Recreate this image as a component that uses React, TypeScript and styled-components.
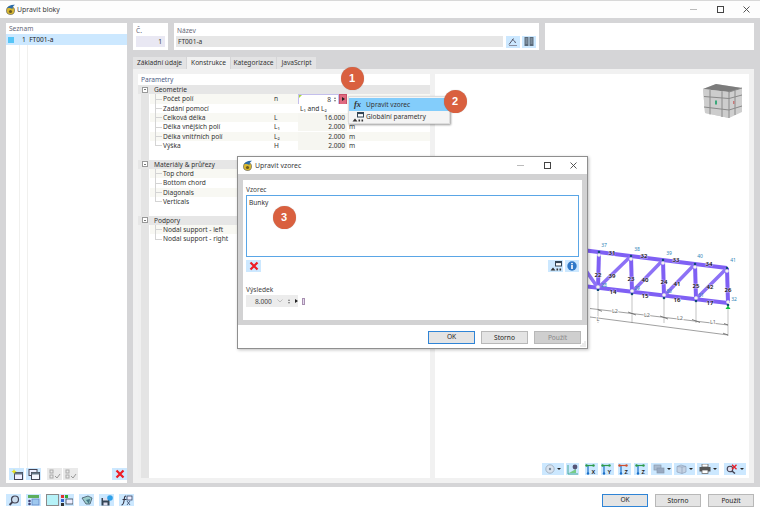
import React from "react";
import styled, { createGlobalStyle } from "styled-components";

const Global = createGlobalStyle`
  html, body { margin: 0; padding: 0; background: #fff; }
  #root { width: 760px; height: 513px; overflow: hidden; }
  * { box-sizing: border-box; }
`;

const Page = styled.div`
  position: relative; width: 760px; height: 513px; overflow: hidden;
  display: flex; flex-direction: column; background: #fff;
  font-family: "Noto Sans", "Open Sans", sans-serif; font-size: 6.6px; color: #3a3a3a;
`;
const TitleBar = styled.div`
  height: 18px; flex: none; display: flex; align-items: center; padding: 0 10px 0 5px; gap: 1px; background: #fdfdfd;
  border-top: 1px solid #d8d8d8; font-size: 6.9px;
`;
const TitleText = styled.span` flex: 1; `;
const WinButtons = styled.div<{ $w: number }>`
  display: flex; align-items: center; justify-content: space-between; width: ${p => p.$w}px; flex: none; color: #333;
`;
const Main = styled.div`
  flex: 1; min-height: 0; display: flex; gap: 6px; padding: 5px 6px 4px; background: #d5d5d7;
`;
const ListPanel = styled.div`
  width: 121px; flex: none; background: #fff; display: flex; flex-direction: column;
`;
const PanelLabel = styled.div`
  height: 11px; padding-left: 3px; line-height: 11px; color: #667;
`;
const ListRow = styled.div`
  height: 11px; background: #cce8ff; display: flex; align-items: center; padding-left: 2px; color: #222; flex: none;
`;
const ListSwatch = styled.span` width: 6px; height: 6px; background: #55c5f7; margin-right: 8px; flex: none; `;
const ListBody = styled.div`
  flex: 1; position: relative; margin-left: 13px; border-left: 1px solid #f0f0ee;
  &::after { content: ""; display: block; width: 7px; height: 100%; margin-left: 0; border-right: 1px solid #f0f0ee; }
`;
const ToolRow = styled.div`
  height: 15px; flex: none; display: flex; align-items: flex-start; padding-left: 3px; gap: 2px;
`;
const RightColumn = styled.div` flex: 1; min-width: 0; display: flex; flex-direction: column; `;
const HeaderRow = styled.div` height: 27px; flex: none; display: flex; gap: 6px; `;
const HeaderCard = styled.div<{ $w?: number }>`
  background: #fff; display: flex; flex-direction: column; padding: 3px 3px 2px;
  ${p => (p.$w ? `width: ${p.$w}px; flex: none;` : "flex: 1; min-width: 0;")}
`;
const HeaderLabel = styled.div` height: 10px; line-height: 9px; color: #667; `;
const NumberField = styled.div`
  height: 11px; background: #e9e8f3; text-align: right; padding-right: 3px; line-height: 11px; color: #333;
`;
const NameLine = styled.div` display: flex; align-items: center; gap: 2px; height: 11px; `;
const NameField = styled.div`
  width: 327px; height: 11px; margin-left: -1px; background: #e6e6e6; padding-left: 2px; line-height: 11px; color: #333; margin-right: 1px;
`;
const Tabs = styled.div` height: 12px; margin-top: 7px; flex: none; display: flex; gap: 1px; `;
const Tab = styled.div<{ $active?: boolean; $w: number }>`
  width: ${p => p.$w}px; text-align: center; line-height: 12px; color: #333;
  background: ${p => (p.$active ? "#f1f1f1" : "#e3e3e4")};
`;
const Surface = styled.div`
  flex: 1; min-height: 0; background: #f1f1f1; display: flex; gap: 5px; padding: 5px;
`;
const ParamPanel = styled.div`
  width: 292px; flex: none; background: #fff; display: flex; flex-direction: column;
`;
const ParamTitle = styled.div` height: 11px; line-height: 11px; padding-left: 3px; color: #4d5c86; flex: none; `;
const Tree = styled.div`
  flex: 1; display: flex; flex-direction: column; background: linear-gradient(90deg, #f0f0f0 0 3px, #e4e4e4 3px 11px, #fff 11px);
`;
const GroupRow = styled.div`
  height: 9.33px; flex: none; background: #e6e6e6; display: flex; align-items: center; padding-left: 4px; color: #333;
`;
const Expander = styled.span`
  width: 6px; height: 6px; border: 1px solid #999; background: #fff; margin-right: 6px; flex: none; position: relative;
  &::after { content: ""; position: absolute; left: 1px; right: 1px; top: 1.5px; height: 1px; background: #777; }
`;
const Spacer = styled.div` height: 9.33px; flex: none; `;
const Row = styled.div<{ $last?: boolean; $tint?: boolean }>`
  height: 9.33px; flex: none; margin-left: 12px; display: flex; align-items: center; position: relative; line-height: 9px;
  background: ${p => (p.$tint ? "#f8f8f3" : "transparent")};
  &::before { content: ""; position: absolute; left: 5px; top: 0; bottom: ${p => (p.$last ? "4.5px" : "0")}; border-left: 1px solid #d4d4d4; }
  &::after { content: ""; position: absolute; left: 5px; width: 7px; top: 4.5px; border-top: 1px solid #d4d4d4; }
`;
const RowName = styled.span<{ $w?: number }>` width: ${p => p.$w ?? 122}px; padding-left: 13px; flex: none; white-space: nowrap; color: #333; `;
const RowSymbol = styled.span` width: 26px; flex: none; padding-left: 2px; color: #333; `;
const RowValue = styled.span<{ $plain?: boolean; $left?: boolean }>`
  width: 49px; flex: none; text-align: ${p => (p.$left ? "left" : "right")}; padding: 0 2px; color: #333; white-space: nowrap;
  background: ${p => (p.$plain ? "#fff" : "#f6f6f1")};
`;
const RowUnit = styled.span` padding-left: 2px; color: #333; `;
const ActiveValue = styled.div`
  width: 41px; height: 11px; flex: none; border: 1px solid #c4bfec; background: #fff; display: flex; align-items: center; justify-content: flex-end;
  padding-right: 1px; gap: 2px; position: relative; margin-right: 0;
  &::before { content: ""; position: absolute; left: 0; top: 0; border-top: 3px solid #a8d838; border-right: 3px solid transparent; }
`;
const Spin = styled.span`
  display: flex; flex-direction: column; gap: 1px; width: 4px; align-items: center;
  &::before { content: ""; border-bottom: 2px solid #777; border-left: 1.5px solid transparent; border-right: 1.5px solid transparent; }
  &::after { content: ""; border-top: 2px solid #777; border-left: 1.5px solid transparent; border-right: 1.5px solid transparent; }
`;
const ArrowBtn = styled.div`
  width: 8px; height: 11px; flex: none; background: #e06a80; border: 1px solid #c85068; display: flex; align-items: center; justify-content: center;
  &::after { content: ""; border-left: 3px solid #222; border-top: 2px solid transparent; border-bottom: 2px solid transparent; }
`;
const Viewer = styled.div`
  flex: 1; min-width: 0; background: #fff; position: relative; display: flex; flex-direction: column; justify-content: flex-end;
`;
const ViewerTools = styled.div`
  height: 15px; flex: none; display: flex; align-items: flex-start; justify-content: flex-end; padding-right: 3px; position: relative;
`;
const CubeSvg = styled.svg` position: absolute; left: 268px; top: 10px; `;
const TrussSvg = styled.svg` position: absolute; left: 0; top: 0; `;
const Tool = styled.span<{ $w?: number; $ml?: number; $off?: boolean }>`
  width: ${p => p.$w ?? 15}px; height: 12px; flex: none; margin-left: ${p => p.$ml ?? 0}px;
  background: ${p => (p.$off ? "#eaeaea" : "#cce8ff")}; display: flex; align-items: center; justify-content: center; gap: 2px;
`;
const Caret = styled.span`
  border-top: 2.5px solid #222; border-left: 2px solid transparent; border-right: 2px solid transparent;
`;
const BottomBar = styled.div`
  height: 26px; flex: none; display: flex; align-items: flex-start; padding: 7px 6px 0; background: #fff;
`;
const BottomTools = styled.div` flex: 1; display: flex; gap: 5px; `;
const Swatch = styled.span`
  width: 13px; height: 12px; flex: none; background: #b6f2f8; border: 1px solid #8a8a8a; margin-right: -5px;
`;
const Buttons = styled.div` display: flex; gap: 7px; `;
const Btn = styled.div<{ $primary?: boolean; $off?: boolean; $w?: number }>`
  width: ${p => p.$w ?? 46}px; height: 13px; text-align: center; line-height: ${p => (p.$primary ? "10px" : "11px")}; background: ${p => (p.$off ? "#cfcfcf" : "#e4e4e4")};
  border: ${p => (p.$primary ? "1.5px solid #2f84d6" : "1px solid #b8b8b8")}; color: ${p => (p.$off ? "#888" : "#222")};
`;
const Menu = styled.div`
  position: absolute; left: 348px; top: 96px; width: 102px; height: 28px; background: #f4f4f4; border: 1px solid #ddd;
  box-shadow: 1px 1px 2px rgba(0,0,0,.4); display: flex; flex-direction: column; padding-top: 1px;
`;
const MenuItem = styled.div<{ $on?: boolean }>`
  height: 12.5px; display: flex; align-items: center; background: ${p => (p.$on ? "#83cdfb" : "transparent")}; color: #333; flex: none;
`;
const MenuIcon = styled.span`
  width: 17px; flex: none; display: flex; justify-content: center; font-family: "Liberation Serif", serif; font-style: italic; font-weight: 700; font-size: 8.5px; color: #333;
`;
const Badge = styled.div<{ $x: number; $y: number }>`
  position: absolute; left: ${p => p.$x - 11.5}px; top: ${p => p.$y - 11.5}px; width: 23px; height: 23px; border-radius: 50%;
  background: #d9603f; color: #fff; font-family: "Liberation Sans", sans-serif; font-weight: 700; font-size: 11px; text-align: center; line-height: 23px;
  box-shadow: 0 0 1px rgba(0,0,0,.3);
`;
const Dialog = styled.div`
  position: absolute; left: 237px; top: 156px; width: 351px; height: 193px; background: #fff; border: 1px solid #8f8f8f;
  box-shadow: 1px 1px 3px rgba(0,0,0,.25); display: flex; flex-direction: column;
`;
const DialogTitle = styled.div`
  height: 17px; flex: none; display: flex; align-items: center; padding: 0 10px 0 4px; gap: 2px; font-size: 6.9px;
`;
const DialogBody = styled.div`
  height: 151px; flex: none; background: #d2d2d3; padding: 6px 5px 5px;
`;
const DialogInner = styled.div`
  height: 140px; background: #fff; padding: 5px 3px 0; display: flex; flex-direction: column;
`;
const FieldLabel = styled.div` height: 10px; line-height: 9px; color: #444; `;
const FormulaBox = styled.div`
  height: 62px; border: 1px solid #5aa6e6; padding: 2px; color: #333; line-height: 9px;
`;
const FormulaTools = styled.div` display: flex; justify-content: space-between; margin-top: 3px; height: 13px; `;
const FormulaRight = styled.div` display: flex; gap: 2px; `;
const ResultLabel = styled(FieldLabel)` margin-top: 12px; `;
const ResultLine = styled.div` display: flex; align-items: center; height: 12px; `;
const ResultField = styled.div`
  width: 52px; height: 12px; background: #ececec; display: flex; align-items: center; padding-left: 9px; gap: 5px; color: #444; flex: none;
`;
const Chevron = styled.svg` flex: none; `;
const ResultArrow = styled.span`
  border-left: 3px solid #222; border-top: 2px solid transparent; border-bottom: 2px solid transparent;
`;
const ResultMark = styled.span`
  width: 3px; height: 7px; margin-left: 4px; border: 1px solid #a890b0; background: #e4daf0;
`;
const DialogFooter = styled.div`
  flex: 1; display: flex; justify-content: flex-end; align-items: flex-start; gap: 6px; padding: 6px 6px 0; position: relative;
`;
const Grip = styled.svg` position: absolute; right: 1px; bottom: 1px; `;

type IconKind = "new" | "copy" | "checks" | "unchecks" | "x" | "search" | "table" | "tree" | "view" | "save" | "fx" | "globals" | "info" | "sigma" | "iso" | "ax" | "layers" | "box" | "print" | "find" | "name" | "col";

const Ico = ({ k, label, c = "#2f6fa8" }: { k: IconKind; label?: string; c?: string }) => {
  switch (k) {
    case "x":
      return <svg width="10" height="10" viewBox="0 0 10 10"><path d="M1.5 1.5l7 7M8.5 1.5l-7 7" stroke="#ee1c25" strokeWidth="2.2" /></svg>;
    case "new":
      return <svg width="12" height="11" viewBox="0 0 12 11"><rect x="3.5" y="3.5" width="8" height="7" fill="#eef" stroke="#445" /><rect x="3.5" y="3.5" width="8" height="2" fill="#678" /><path d="M3 0l.8 1.8L5.6 2.6 3.8 3.4 3 5.2 2.2 3.4.4 2.6l1.8-.8z" fill="#e8e020" /></svg>;
    case "copy":
      return <svg width="12" height="11" viewBox="0 0 12 11"><rect x="1" y=".5" width="8" height="6" fill="#eef" stroke="#445" /><rect x="3.5" y="3.5" width="8" height="7" fill="#f5f5ff" stroke="#445" /><rect x="3.5" y="3.5" width="8" height="2" fill="#678" /></svg>;
    case "checks":
    case "unchecks":
      return <svg width="12" height="10" viewBox="0 0 12 10"><rect x="1" y="1" width="3" height="3" fill="none" stroke="#aaa" /><rect x="1" y="6" width="3" height="3" fill="none" stroke="#aaa" /><path d="M6 7l2 2 3-4" fill="none" stroke="#999" /></svg>;
    case "search":
      return <svg width="12" height="11" viewBox="0 0 12 11"><circle cx="7" cy="4.5" r="3.5" fill="#cde" stroke="#445" strokeWidth="1.2" /><path d="M4.5 7L1.5 10" stroke="#445" strokeWidth="1.8" /></svg>;
    case "table":
      return <svg width="13" height="11" viewBox="0 0 13 11"><rect x="1" y="0" width="11" height="3" fill="#5cae5c" /><rect x="5" y="4" width="7" height="6" fill="#9ec8ee" stroke="#5a7fc0" strokeWidth=".7" /><circle cx="2.5" cy="6" r="1.3" fill="#447" /><circle cx="2.5" cy="9" r="1.3" fill="#447" /></svg>;
    case "tree":
      return <svg width="13" height="11" viewBox="0 0 13 11"><rect x="1" y="0" width="3" height="3" fill="#d33" /><rect x="5" y="0" width="3" height="3" fill="#3a3" /><rect x="1" y="4" width="3" height="3" fill="#36c" /><rect x="1" y="8" width="3" height="3" fill="#333" /><rect x="6" y="4" width="7" height="5" fill="#eef" stroke="#345" strokeWidth=".8" /></svg>;
    case "view":
      return <svg width="12" height="11" viewBox="0 0 12 11"><path d="M1 3l6-2 4 2-2 6H5z" fill="#9cc" stroke="#456" strokeWidth=".8" /><path d="M5 5l4-1-1 5" fill="#478" /></svg>;
    case "save":
      return <svg width="12" height="11" viewBox="0 0 12 11"><rect x="0.5" y="3" width="8" height="7.5" fill="#345" /><rect x="2" y="3" width="5" height="2.5" fill="#dde" /><rect x="2.5" y="7.5" width="4" height="3" fill="#dde" /><circle cx="9" cy="3" r="2.8" fill="#2fa0e8" /></svg>;
    case "fx":
      return <svg width="13" height="11" viewBox="0 0 13 11"><path d="M6 1C4 1 4.5 3 4 6S3 10 1.5 10" fill="none" stroke="#334" strokeWidth="1.1" /><path d="M2.5 4.5h4" stroke="#334" /><rect x="7" y="1" width="5" height="4" fill="#eef" stroke="#346" strokeWidth=".8" /><path d="M7 6l3 4M10 6l-3 4" stroke="#346" strokeWidth=".8" /></svg>;
    case "globals":
      return <svg width="12" height="10" viewBox="0 0 12 10"><rect x="5.5" y=".5" width="6" height="4.5" fill="#fff" stroke="#345" /><rect x="5.5" y=".5" width="6" height="1.6" fill="#345" /><path d="M.5 9.5L3 6.5l2.5 3z" fill="#333" /><rect x="6.5" y="7.5" width="1.6" height="2" fill="#333" /><rect x="9.5" y="7.5" width="1.6" height="2" fill="#333" /></svg>;
    case "info":
      return <svg width="10" height="10" viewBox="0 0 10 10"><circle cx="5" cy="5" r="4.7" fill="#2f78c8" /><rect x="4.2" y="4" width="1.6" height="4" fill="#fff" /><rect x="4.2" y="1.9" width="1.6" height="1.4" fill="#fff" /></svg>;
    case "name":
      return <svg width="10" height="9" viewBox="0 0 10 9"><path d="M1 7.5L5.500 1.500M4 2.500C6 3 7 4.500 7.500 6" fill="none" stroke="#556" strokeWidth="1" /><path d="M1 8.500h8" stroke="#778" strokeWidth=".8" /></svg>;
    case "col":
      return <svg width="10" height="9" viewBox="0 0 10 9"><rect x="0.500" y="0" width="4" height="9" fill="#5a6a7a" /><rect x="5.500" y="0" width="4" height="9" fill="#5a6a7a" /><path d="M1.500 2h2M1.500 4h2M1.500 6h2M6.500 2h2M6.500 4h2M6.500 6h2" stroke="#cde" strokeWidth=".6" /></svg>;
    case "iso":
      return <svg width="10" height="10" viewBox="0 0 10 10"><circle cx="5" cy="5" r="4.2" fill="#d8e2ee" stroke="#9ab" strokeWidth=".8" /><circle cx="5" cy="5" r="1.2" fill="#789" /></svg>;
    case "sigma":
      return <svg width="12" height="11" viewBox="0 0 12 11"><path d="M1 1v9h10" fill="none" stroke="#4a9" strokeWidth="1" /><path d="M2 9l7-4v4z" fill="#7c8" /><circle cx="8" cy="3" r="2.4" fill="#557" /></svg>;
    case "ax":
      return <svg width="13" height="11" viewBox="0 0 13 11"><path d="M3 2v7" stroke="#1b6fc8" strokeWidth="1.2" /><path d="M1 1.5h7" stroke={c} strokeWidth="1.2" /><circle cx="1.5" cy="1.5" r="1.2" fill={c} /><circle cx="8.5" cy="1.5" r="1.2" fill={c} /><circle cx="3" cy="9.5" r="1.2" fill="#1b6fc8" /><text x="6.4" y="10" fontSize="5.5" fontWeight="700" fill="#222" fontFamily="Liberation Sans">{label}</text></svg>;
    case "layers":
      return <svg width="12" height="10" viewBox="0 0 12 10"><rect x="1" y="1" width="7" height="5" fill="#aabbd0" stroke="#8899ad" strokeWidth=".7" /><rect x="4" y="4" width="7" height="5" fill="#98aac2" stroke="#8899ad" strokeWidth=".7" /></svg>;
    case "box":
      return <svg width="11" height="10" viewBox="0 0 11 10"><path d="M1 2.5L5 1l5 1.5V8L6 9.5 1 8z" fill="#c5d3e4" stroke="#8fa2ba" strokeWidth=".7" /><path d="M6 3v6.5M1 2.5L6 3l4-.5" stroke="#8fa2ba" strokeWidth=".7" fill="none" /></svg>;
    case "print":
      return <svg width="12" height="10" viewBox="0 0 12 10"><rect x="3" y="0" width="6" height="3" fill="#fff" stroke="#555" strokeWidth=".7" /><rect x="0.5" y="3" width="11" height="4.5" fill="#555" /><rect x="3" y="6" width="6" height="3.5" fill="#fff" stroke="#555" strokeWidth=".7" /></svg>;
    case "find":
      return <svg width="12" height="10" viewBox="0 0 12 10"><circle cx="4" cy="5" r="2.8" fill="#dde" stroke="#445" strokeWidth="1.1" /><path d="M6 7l3 2.5" stroke="#445" strokeWidth="1.5" /><path d="M6 .8l4.5 4.5M10.5.8L6 5.3" stroke="#e8202a" strokeWidth="1.4" /></svg>;
  }
};

const LogoIcon = () => (
  <svg width="11" height="12" viewBox="0 0 11 12">
    <path d="M1.5 6a4 4 0 1 0 8 1 4 4 0 0 0-8-1z" fill="#d8b830" stroke="#555" strokeWidth=".6" />
    <path d="M2 4.5C3 2 6 .5 10 .8 8 2 7.500 3.500 7.500 5 5.500 3.800 3.500 4 2 4.500z" fill="#2d6ca8" />
    <circle cx="5.500" cy="7.500" r="1.600" fill="#6a5a20" />
  </svg>
);

const MinIcon = () => <svg width="7" height="7" viewBox="0 0 7 7"><path d="M0 3.500h7" stroke="#aaa" strokeWidth=".8" /></svg>;
const MaxIcon = () => <svg width="7" height="7" viewBox="0 0 7 7"><rect x=".5" y=".5" width="6" height="6" fill="none" stroke="#444" /></svg>;
const CloseIcon = () => <svg width="7" height="7" viewBox="0 0 7 7"><path d="M.5 .5l6 6M6.500 .5l-6 6" stroke="#444" strokeWidth=".9" /></svg>;

const Cube = () => (
  <CubeSvg width="39" height="34" viewBox="0 0 39 34">
    <path d="M0 5L13 0 39 4 39 28 26 34 2 29z" fill="#cfcfcf" />
    <path d="M0 5L13 0 39 4 26 8z" fill="#7c7c7c" />
    <path d="M0 5l26 3v26L2 29z" fill="#cdcdcd" />
    <path d="M7 5.800V30.500M19 7.200V33M1 12.500l25 2M1 23l25 3M26 8V34M26 8L39 4M26 14.500L39 11M26 26l13-4M32 6.500V31" stroke="#8a8a8a" strokeWidth="1" fill="none" />
    <rect x="12" y="16.500" width="2" height="4" fill="#3aa87a" />
    <rect x="30" y="17" width="1.500" height="3" fill="#c87a7a" />
  </CubeSvg>
);

const Truss = () => {
  const top = [[566, 248], [599, 252], [631, 256], [663, 260], [695, 264], [727, 268]];
  const bot = [[566, 284], [598, 288], [632, 292], [664, 296], [696, 299], [728, 303]];
  const ticks = [598, 632, 664, 696, 728];
  const members = "#7f60f4";
  return (
    <TrussSvg width="314" height="405" viewBox="435 74 314 405">
      {ticks.map(x => <path key={x} d={`M${x} 292V${x === 728 ? 336 : 323}`} stroke="#aaa" strokeWidth=".7" />)}
      <path d="M590 308.500L728 325M590 317L728 335" stroke="#777" strokeWidth=".7" fill="none" />
      <path d="M598 309.800l4 1.500M632 313.500l-4-1.500M632 313.500l4 1.500M664 317.500l-4-1.500M664 317.500l4 1.500M696 321l-4-1.500M696 321l4 1.500M728 325l-4-1.500M728 335l-5-1.800" stroke="#666" strokeWidth=".8" fill="none" />
      <path d="M566 248L727 268M566 284L728 303" stroke={members} strokeWidth="4" fill="none" />
      {top.map((t, i) => <path key={i} d={`M${t[0]} ${t[1]}L${bot[i][0]} ${bot[i][1]}`} stroke={members} strokeWidth="4" />)}
      <path d="M580 262L598 288L631 256M632 292L663 260M664 296L695 264M696 299L727 268" stroke="#8d72f6" strokeWidth="3.500" fill="none" />
      {[...top.slice(1), ...bot.slice(1)].map((p, i) => (
        <React.Fragment key={i}>
          <circle cx={p[0]} cy={i < 5 ? p[1] + 3 : p[1] - 1} r="1.800" fill="#f4f4f0" />
          <circle cx={p[0]} cy={i < 5 ? p[1] : p[1] + 2} r="1.300" fill="#124a78" />
        </React.Fragment>
      ))}
      <path d="M725.500 309l2.500-3.500 2.500 3.500z" fill="#10c040" />
      {[["37", 604, 247], ["38", 637, 251], ["39", 669, 255], ["40", 700, 258], ["41", 733, 262], ["28", 604, 287], ["29", 637, 290], ["30", 669, 293], ["31", 701, 297], ["32", 734, 301]].map(([t, x, y]) => (
        <NodeText key={String(t)} x={x as number} y={y as number}>{t}</NodeText>
      ))}
      {[["31", 612, 255], ["32", 644, 258], ["33", 676, 262], ["34", 709, 266], ["22", 598, 277], ["39", 612, 278], ["23", 631, 281], ["40", 645, 282], ["24", 664, 284], ["41", 677, 286], ["25", 696, 288], ["42", 710, 289], ["26", 728, 292], ["14", 613, 294], ["15", 645, 298], ["16", 677, 302], ["17", 710, 305]].map(([t, x, y], i) => (
        <MemberText key={i} x={x as number} y={y as number}>{t}</MemberText>
      ))}
      {[["L2", 615, 313], ["L2", 647, 317], ["L2", 680, 320], ["L1", 713, 324], ["L", 598, 321]].map(([t, x, y], i) => (
        <DimText key={i} x={x as number} y={y as number}>{t}</DimText>
      ))}
    </TrussSvg>
  );
};
const NodeText = styled.text` font-size: 5px; fill: #2e86b8; text-anchor: middle; font-family: "Noto Sans", sans-serif; `;
const MemberText = styled.text`
  font-size: 6px; fill: #111; font-weight: 600; text-anchor: middle; font-family: "Noto Sans", sans-serif;
  paint-order: stroke; stroke: rgba(255,255,255,.45); stroke-width: 1.2px;
`;
const DimText = styled.text` font-size: 5.500px; fill: #666; text-anchor: middle; font-family: "Noto Sans", sans-serif; paint-order: stroke; stroke: #fff; stroke-width: 1.500px; `;

const Chev = () => <Chevron width="6" height="4" viewBox="0 0 6 4"><path d="M.5 .5L3 3 5.500 .5" fill="none" stroke="#aaa" strokeWidth=".7" /></Chevron>;

export default function App() {
  return (
    <Page>
      <Global />
      <TitleBar>
        <LogoIcon />
        <TitleText>Upravit bloky</TitleText>
        <WinButtons $w={60}><MinIcon /><MaxIcon /><CloseIcon /></WinButtons>
      </TitleBar>
      <Main>
        <ListPanel>
          <PanelLabel>Seznam</PanelLabel>
          <ListRow><ListSwatch />1&nbsp;&nbsp;FT001-a</ListRow>
          <ListBody />
          <ToolRow>
            <Tool><Ico k="new" /></Tool>
            <Tool><Ico k="copy" /></Tool>
            <Tool $off $ml={4}><Ico k="checks" /></Tool>
            <Tool $off $ml={-1}><Ico k="unchecks" /></Tool>
            <Tool $ml={32}><Ico k="x" /></Tool>
          </ToolRow>
        </ListPanel>
        <RightColumn>
          <HeaderRow>
            <HeaderCard $w={35}>
              <HeaderLabel>Č.</HeaderLabel>
              <NumberField>1</NumberField>
            </HeaderCard>
            <HeaderCard $w={365}>
              <HeaderLabel>Název</HeaderLabel>
              <NameLine>
                <NameField>FT001-a</NameField>
                <Tool $w={14}><Ico k="name" /></Tool>
                <Tool $w={14}><Ico k="col" /></Tool>
              </NameLine>
            </HeaderCard>
            <HeaderCard />
          </HeaderRow>
          <Tabs>
            <Tab $w={53}>Základní údaje</Tab>
            <Tab $w={43} $active>Konstrukce</Tab>
            <Tab $w={45}>Kategorizace</Tab>
            <Tab $w={39}>JavaScript</Tab>
          </Tabs>
          <Surface>
            <ParamPanel>
              <ParamTitle>Parametry</ParamTitle>
              <Tree>
                <GroupRow><Expander />Geometrie</GroupRow>
                <Row $tint>
                  <RowName>Počet polí</RowName><RowSymbol>n</RowSymbol>
                  <ActiveValue>8<Spin /></ActiveValue><ArrowBtn />
                </Row>
                <Row><RowName>Zadání pomocí</RowName><RowSymbol /><RowValue $plain $left>L₁ and L₂</RowValue></Row>
                <Row $tint><RowName>Celková délka</RowName><RowSymbol>L</RowSymbol><RowValue>16.000</RowValue><RowUnit>m</RowUnit></Row>
                <Row><RowName>Délka vnějších polí</RowName><RowSymbol>L₁</RowSymbol><RowValue>2.000</RowValue><RowUnit>m</RowUnit></Row>
                <Row $tint><RowName>Délka vnitřních polí</RowName><RowSymbol>L₂</RowSymbol><RowValue>2.000</RowValue><RowUnit>m</RowUnit></Row>
                <Row $last><RowName>Výška</RowName><RowSymbol>H</RowSymbol><RowValue>2.000</RowValue><RowUnit>m</RowUnit></Row>
                <Spacer />
                <GroupRow><Expander />Materiály &amp; průřezy</GroupRow>
                <Row $tint><RowName>Top chord</RowName></Row>
                <Row><RowName>Bottom chord</RowName></Row>
                <Row $tint><RowName>Diagonals</RowName></Row>
                <Row $last><RowName>Verticals</RowName></Row>
                <Spacer />
                <GroupRow><Expander />Podpory</GroupRow>
                <Row $tint><RowName>Nodal support - left</RowName></Row>
                <Row $last><RowName>Nodal support - right</RowName></Row>
              </Tree>
            </ParamPanel>
            <Viewer>
              <Truss />
              <Cube />
              <ViewerTools>
                <Tool $w={22}><Ico k="iso" /><Caret /></Tool>
                <Tool $w={13} $ml={2}><Ico k="sigma" /></Tool>
                <Tool $w={13} $ml={6}><Ico k="ax" label="X" c="#2e9a4a" /></Tool>
                <Tool $w={13} $ml={3}><Ico k="ax" label="Y" c="#2e9a4a" /></Tool>
                <Tool $w={13} $ml={4}><Ico k="ax" label="Z" c="#d05030" /></Tool>
                <Tool $w={14} $ml={3}><Ico k="ax" label="Z" c="#2e9a4a" /></Tool>
                <Tool $w={21} $ml={3}><Ico k="layers" /><Caret /></Tool>
                <Tool $w={21} $ml={2}><Ico k="box" /><Caret /></Tool>
                <Tool $w={22} $ml={2}><Ico k="print" /><Caret /></Tool>
                <Tool $w={22} $ml={5}><Ico k="find" /><Caret /></Tool>
              </ViewerTools>
            </Viewer>
          </Surface>
        </RightColumn>
      </Main>
      <BottomBar>
        <BottomTools>
          <Tool><Ico k="search" /></Tool>
          <Tool><Ico k="table" /></Tool>
          <Swatch />
          <Tool><Ico k="tree" /></Tool>
          <Tool><Ico k="view" /></Tool>
          <Tool><Ico k="save" /></Tool>
          <Tool><Ico k="fx" /></Tool>
        </BottomTools>
        <Buttons>
          <Btn $primary>OK</Btn>
          <Btn>Storno</Btn>
          <Btn>Použít</Btn>
        </Buttons>
      </BottomBar>

      <Menu>
        <MenuItem $on><MenuIcon>fx</MenuIcon>Upravit vzorec</MenuItem>
        <MenuItem><MenuIcon><Ico k="globals" /></MenuIcon>Globální parametry</MenuItem>
      </Menu>

      <Dialog>
        <DialogTitle>
          <LogoIcon />
          <TitleText>Upravit vzorec</TitleText>
          <WinButtons $w={60}><MinIcon /><MaxIcon /><CloseIcon /></WinButtons>
        </DialogTitle>
        <DialogBody>
          <DialogInner>
            <FieldLabel>Vzorec</FieldLabel>
            <FormulaBox>Bunky</FormulaBox>
            <FormulaTools>
              <Tool><Ico k="x" /></Tool>
              <FormulaRight>
                <Tool><Ico k="globals" /></Tool>
                <Tool $w={14}><Ico k="info" /></Tool>
              </FormulaRight>
            </FormulaTools>
            <ResultLabel>Výsledek</ResultLabel>
            <ResultLine>
              <ResultField>8.000<Chev /><Spin /><ResultArrow /></ResultField>
              <ResultMark />
            </ResultLine>
          </DialogInner>
        </DialogBody>
        <DialogFooter>
          <Btn $primary $w={47}>OK</Btn>
          <Btn $w={47}>Storno</Btn>
          <Btn $off $w={47}>Použít</Btn>
          <Grip width="6" height="6" viewBox="0 0 6 6"><path d="M5 1v0M3 3v0M5 3v0M1 5v0M3 5v0M5 5v0" stroke="#aaa" strokeWidth="1" strokeLinecap="square" /></Grip>
        </DialogFooter>
      </Dialog>

      <Badge $x={352} $y={78}>1</Badge>
      <Badge $x={455} $y={101}>2</Badge>
      <Badge $x={284} $y={217}>3</Badge>
    </Page>
  );
}
